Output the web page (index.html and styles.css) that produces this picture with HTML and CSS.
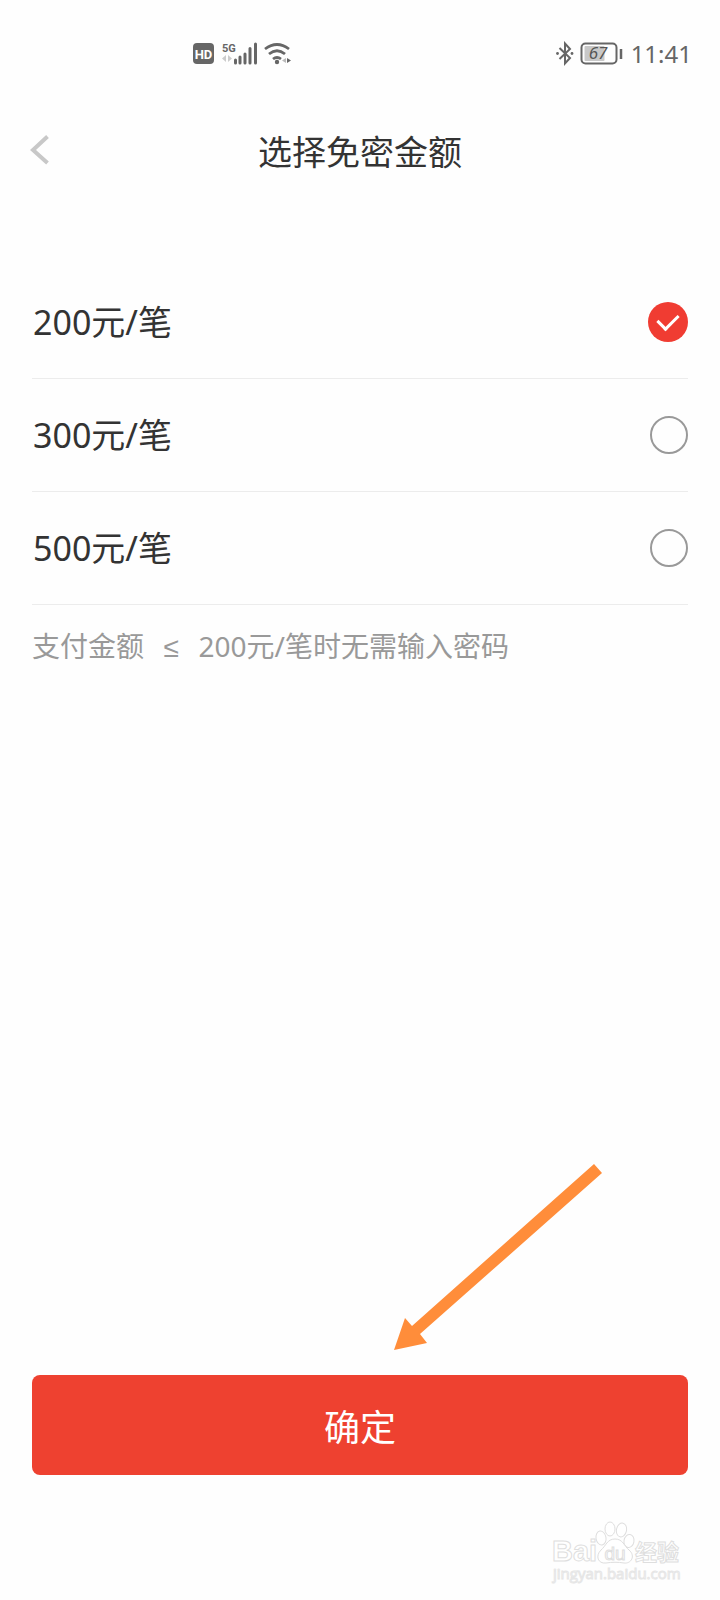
FILE: index.html
```html
<!DOCTYPE html>
<html lang="zh-CN">
<head>
<meta charset="utf-8">
<meta name="viewport" content="width=device-width, initial-scale=1">
<title>选择免密金额</title>
<link rel="stylesheet" href="styles.css">
</head>
<body>
<div class="screen">
  <div class="status">
    <svg class="status-signal" width="100" height="28" viewBox="0 0 100 28" aria-hidden="true">
      <rect x="1" y="3" width="21" height="21" rx="4" fill="#666"/>
      <text x="11.5" y="18.5" text-anchor="middle" class="hd">HD</text>
      <text x="30" y="12" class="five-g">5G</text>
      <path d="M34 15v7l-4-3.500zM36 15v7l4-3.500z" fill="#ccc"/>
      <path d="M43.500 23v-3M48 23v-6M53 23v-9M58 23V8.500M63.500 23V4" stroke="#666" stroke-width="3" stroke-linecap="round"/>
      <path d="M73 9q12-9 24 0M77 14q8-6.500 16 0M81 19q4-3 8 0" fill="none" stroke="#666" stroke-width="2.800"/>
      <circle cx="85" cy="22" r="2.200" fill="#666"/>
      <path d="M94 18v5l-4-2.500z" fill="#bbb"/>
      <path d="M95 18v5l4-2.500z" fill="#666"/>
    </svg>
    <div class="status-right">
      <svg width="68" height="26" viewBox="0 0 68 26" aria-hidden="true">
        <path d="M4.500 7l10.500 10-5 5.500v-20l5 5.500-10.500 10" fill="none" stroke="#666" stroke-width="2"/>
        <circle cx="2.500" cy="12.500" r="1.400" fill="#666"/>
        <circle cx="17" cy="12.500" r="1.400" fill="#666"/>
        <rect x="26.500" y="2.500" width="35" height="20" rx="4" fill="none" stroke="#666" stroke-width="2"/>
        <rect x="29.500" y="5" width="20" height="15" rx="1" fill="#c8c8c8"/>
        <text x="43" y="18" text-anchor="middle" class="charge">67</text>
        <path d="M66 8v10" stroke="#666" stroke-width="2.500"/>
      </svg>
      <span class="clock">11:41</span>
    </div>
  </div>

  <header class="header">
    <button class="back" type="button" aria-label="返回">
      <svg width="20" height="30" viewBox="0 0 20 30" aria-hidden="true"><path d="M17.500 1.500L3 15l14.500 13" fill="none" stroke="#c8c8c8" stroke-width="4"/></svg>
    </button>
    <h1 class="title">选择免密金额</h1>
  </header>

  <form class="form">
    <div class="options" role="radiogroup" aria-label="免密金额">
      <label class="option" for="a200"><span>200元/笔</span><input class="radio" type="radio" id="a200" name="amount" checked></label>
      <label class="option" for="a300"><span>300元/笔</span><input class="radio" type="radio" id="a300" name="amount"></label>
      <label class="option" for="a500"><span>500元/笔</span><input class="radio" type="radio" id="a500" name="amount"></label>
    </div>
    <p class="hint">支付金额&nbsp; <span class="sign">≤</span>&nbsp; 200元/笔时无需输入密码</p>
    <div class="submit-area">
      <svg class="arrow" width="208" height="186" viewBox="0 0 208 186" aria-hidden="true"><path d="M200 0l8 9L26 170l7 9L0 186l11-32 7 8z" fill="#ff8d3a"/></svg>
      <button class="submit" type="button">确定</button>
    </div>
  </form>

  <footer class="footer">
    <svg width="132" height="68" viewBox="0 0 132 68" role="img" aria-label="Baidu 经验">
      <g fill="#fff" stroke="#dedede" stroke-width="1">
        <text x="2" y="41" class="brand">Bai</text>
        <ellipse cx="51" cy="18" rx="5" ry="7" transform="rotate(-10 51 18)"/>
        <ellipse cx="60" cy="9" rx="5" ry="7"/>
        <ellipse cx="71.500" cy="10" rx="5" ry="7" transform="rotate(12 71.500 10)"/>
        <ellipse cx="79" cy="21" rx="5" ry="6.500" transform="rotate(10 79 21)"/>
        <path d="M65 19c8 0 9 7 14 11 7 6 2 14-5 13-6-1-12-1-18 0-8 1-11-7-5-13 5-4 6-11 14-11z"/>
        <text x="65" y="40" text-anchor="middle" class="du">du</text>
        <text x="85" y="40" class="brand-cn">经验</text>
      </g>
      <text x="3" y="59" class="site">jingyan.baidu.com</text>
    </svg>
  </footer>
</div>
</body>
</html>
```
FILE: styles.css
```css
* {
  box-sizing: border-box;
}

body {
  margin: 0;
  background: #fefefe;
  color: #333;
  font-family: "Noto Sans", "Noto Sans CJK SC", sans-serif;
}

.screen {
  display: flex;
  flex-direction: column;
  min-height: 100vh;
}

.status {
  display: flex;
  align-items: center;
  justify-content: space-between;
  height: 108px;
  padding: 0 28px 0 192px;
}

.status-right {
  display: flex;
  align-items: center;
  gap: 8px;
}

.clock {
  color: #666;
  font-size: 24px;
  line-height: 28px;
}

.hd {
  fill: #fff;
  font: bold 13px Roboto, sans-serif;
}

.five-g {
  fill: #666;
  font: bold 11px Roboto, sans-serif;
}

.charge {
  fill: #555;
  font: italic 17px "Noto Sans", sans-serif;
}

.header {
  display: grid;
  grid-template-columns: 20px 1fr 20px;
  align-items: center;
  height: 88px;
  padding: 0 30px;
}

.back {
  display: flex;
  padding: 0 0 4px;
  border: 0;
  background: none;
}

.title {
  margin: 0;
  font-size: 34px;
  font-weight: 400;
  line-height: 48px;
  text-align: center;
}

.form {
  display: flex;
  flex: 1;
  flex-direction: column;
  padding: 70px 32px 0;
}

.option {
  display: flex;
  align-items: center;
  justify-content: space-between;
  height: 113px;
  padding-left: 1px;
  border-bottom: 1px solid #ececec;
  font-size: 34px;
  line-height: 48px;
}

.radio {
  display: grid;
  place-items: center;
  width: 38px;
  height: 38px;
  margin: 0;
  border: 2px solid #999;
  border-radius: 50%;
  appearance: none;
}

.radio:checked {
  width: 40px;
  height: 40px;
  border: 0;
  background: #f03c32;
}

.radio:checked::after {
  width: 17px;
  height: 10px;
  margin-bottom: 5px;
  border-bottom: 3px solid #fff;
  border-left: 3px solid #fff;
  content: "";
  transform: rotate(-45deg);
}

.hint {
  margin: 21px 0;
  color: #999;
  font-size: 28px;
  line-height: 40px;
}

.sign {
  margin: 0 5px;
  font-family: "Liberation Sans", sans-serif;
}

.submit-area {
  display: flex;
  flex-direction: column;
  align-items: center;
  gap: 25px;
  margin-top: auto;
}

.arrow {
  margin-left: 276px;
}

.submit {
  width: 100%;
  height: 100px;
  border: 0;
  border-radius: 8px;
  background: #ee4130;
  color: #fff;
  font: 36px/48px "Noto Sans CJK SC", sans-serif;
}

.footer {
  display: flex;
  align-items: flex-end;
  justify-content: flex-end;
  height: 125px;
  padding: 0 38px 12px 0;
}

.brand {
  font: bold 29px "Liberation Sans", sans-serif;
}

.du {
  font: 19px "Liberation Sans", sans-serif;
}

.brand-cn {
  font: bold 22px "Noto Sans CJK SC", sans-serif;
}

.site {
  fill: #fff;
  stroke: #e6e6e6;
  stroke-width: 1px;
  font: 15px "Open Sans", sans-serif;
}
```
